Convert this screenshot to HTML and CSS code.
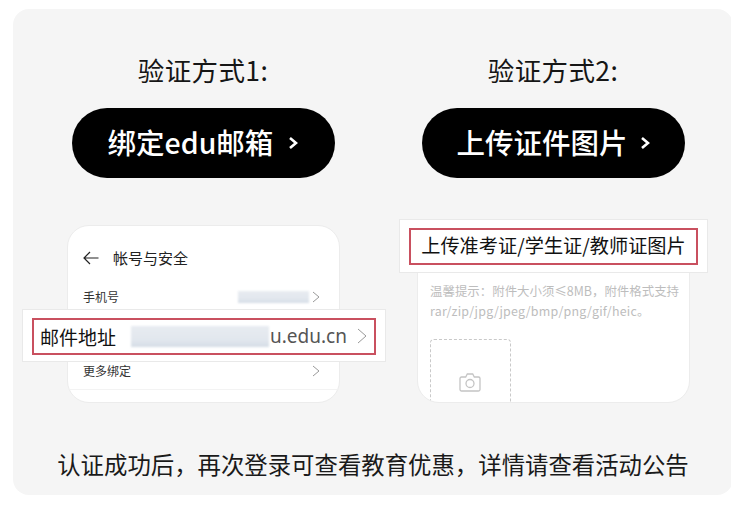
FILE: index.html
```html
<!DOCTYPE html>
<html lang="zh-CN">
<head>
<meta charset="utf-8">
<title>验证方式</title>
<link rel="stylesheet" href="styles.css">
</head>
<body>
<main class="panel">
  <div class="methods">
    <section class="method">
      <h2 class="method-title">验证方式1:</h2>
      <a class="cta cta-email"><span class="cta-label">绑定edu邮箱</span>
        <svg class="cta-chevron" viewBox="0 0 10 14"><path d="M2 2l6 5-6 5"/></svg></a>
      <div class="shot">
        <div class="card">
          <div class="nav">
            <svg class="back" viewBox="0 0 16 14"><path d="M15.500 7H1M7 1L1 7l6 6"/></svg>
            <span class="nav-title">帐号与安全</span>
          </div>
          <div class="row row-phone">
            <span>手机号</span>
            <span class="row-end"><i class="smear smear-phone"></i>
              <svg class="chev" viewBox="0 0 8 12"><path d="M1 1l6 5-6 5"/></svg></span>
          </div>
          <div class="row row-more">
            <span>更多绑定</span>
            <svg class="chev" viewBox="0 0 8 12"><path d="M1 1l6 5-6 5"/></svg>
          </div>
          <div class="rule"></div>
        </div>
        <div class="callout callout-email">
          <div class="callout-box box-email">
            <span class="mail-label">邮件地址</span>
            <i class="smear smear-mail"></i>
            <span class="mail-domain">u.edu.cn</span>
            <svg class="chev-lg" viewBox="0 0 10 16"><path d="M1 1l8 7-8 7"/></svg>
          </div>
        </div>
      </div>
    </section>
    <section class="method">
      <h2 class="method-title">验证方式2:</h2>
      <a class="cta cta-upload"><span class="cta-label">上传证件图片</span>
        <svg class="cta-chevron" viewBox="0 0 10 14"><path d="M2 2l6 5-6 5"/></svg></a>
      <div class="shot">
        <div class="card card-upload">
          <p class="hint">温馨提示&#xFF1A;附件大小须≤8MB&#xFF0C;附件格式支持<br><span class="hint-formats">rar/zip/jpg/jpeg/bmp/png/gif/heic。</span></p>
          <div class="dropzone">
            <svg class="camera" viewBox="0 0 22 19"><path d="M2.500 4h4.200l1.600-3h5.400l1.600 3h4.200a1.500 1.500 0 0 1 1.500 1.500v11a1.500 1.500 0 0 1-1.500 1.500h-17A1.500 1.500 0 0 1 1 16.500v-11A1.500 1.500 0 0 1 2.500 4z"/><circle cx="11" cy="10.500" r="4"/></svg>
          </div>
        </div>
        <div class="callout callout-upload">
          <div class="callout-box box-upload">上传准考证/学生证/教师证图片</div>
        </div>
      </div>
    </section>
  </div>
  <p class="note">认证成功后&#xFF0C;再次登录可查看教育优惠&#xFF0C;详情请查看活动公告</p>
</main>
</body>
</html>
```

FILE: styles.css
```css
* { box-sizing: border-box; }
html, body { margin: 0; height: 100%; overflow: hidden; background: #fff; }
body {
  font-family: "Noto Sans CJK SC", "Noto Sans", sans-serif;
  color: #111;
  padding: 9px 0 0 13px;
}
.panel {
  width: 720px;
  height: 486px;
  background: #f5f5f5;
  border-radius: 16px;
  padding: 43px 15px 0;
}
.methods { display: grid; grid-template-columns: 350px 350px; }
.method { display: flex; flex-direction: column; align-items: center; }
.method-title {
  margin: 0;
  font-size: 26.500px;
  line-height: 36px;
  font-weight: 400;
  color: #161616;
  letter-spacing: .4px;
}
.cta {
  margin-top: 20px;
  width: 263px;
  height: 70px;
  border-radius: 35px;
  background: #000;
  color: #fff;
  font-size: 28.500px;
  font-weight: 500;
  display: flex;
  align-items: center;
  justify-content: center;
}
.cta-label { position: relative; top: -2px; }
.cta-email { gap: 15px; }
.cta-upload { gap: 12px; }
.cta-chevron { width: 10px; height: 14px; fill: none; stroke: #fff; stroke-width: 2.600; }
.shot { position: relative; margin: 47px 0 0 1px; width: 273px; height: 178px; }
.card {
  height: 100%;
  background: #fff;
  border: 1px solid #ececec;
  border-radius: 22px;
  overflow: hidden;
  padding: 0 15px;
}
.nav { display: flex; align-items: center; height: 22px; margin-top: 21px; }
.back { width: 16px; height: 14px; fill: none; stroke: #222; stroke-width: 1.200; }
.nav-title { margin-left: 14px; font-size: 15px; line-height: 22px; color: #222; }
.row {
  display: flex;
  justify-content: space-between;
  align-items: center;
  font-size: 12px;
  line-height: 18px;
  color: #333;
}
.row-phone { margin-top: 19px; }
.row-more { margin-top: 56px; }
.row-end { display: flex; align-items: center; gap: 3px; }
.chev { width: 8px; height: 12px; fill: none; stroke: #999; stroke-width: 1; margin-right: 4px; }
.rule { height: 1px; background: #f3f3f3; margin: 9px -15px 0; }
.smear { display: block; background: linear-gradient(#e8ecf1, #e2e7ee 65%, #d5dde6); filter: blur(1px); }
.smear-phone { width: 71px; height: 12px; }
.smear-mail { width: 138px; height: 21px; margin-left: 15px; }
.callout {
  position: absolute;
  background: #fff;
  border: 1px solid #e9e9e9;
  padding: 8px 9px;
}
.callout-box { border: 2px solid #c9505f; height: 37px; display: flex; align-items: center; }
.callout-email { left: -45px; top: 84px; width: 364px; height: 53px; }
.callout-upload { left: -18px; top: -6px; width: 309px; height: 54px; }
.box-email { padding: 0 0 1px 6px; }
.mail-label { font-size: 19px; color: #111; width: 76px; }
.mail-domain { font-size: 19px; color: #555; font-family: "Noto Sans", sans-serif; margin-left: 1px; }
.chev-lg { width: 10px; height: 16px; fill: none; stroke: #999; stroke-width: 1; margin-left: 10px; }
.box-upload { justify-content: center; padding-bottom: 3px; font-size: 19.200px; color: #111; white-space: nowrap; }
.card-upload { padding: 0 12px; }
.hint {
  margin: 55px 0 0;
  font-size: 12.450px;
  line-height: 20px;
  color: #bdbdbd;
  white-space: nowrap;
}
.hint-formats { letter-spacing: .2px; }
.dropzone {
  margin-top: 18px;
  width: 81px;
  height: 80px;
  border: 1px dashed #c9c9c9;
  border-radius: 4px;
  padding: 33px 0 0 28px;
}
.camera { display: block; width: 22px; height: 19px; fill: none; stroke: #c4c4c4; stroke-width: 1.300; }
.note {
  margin: 44px 0 0;
  text-align: center;
  font-size: 23.400px;
  line-height: 34px;
  color: #1a1a1a;
  white-space: nowrap;
}
```
